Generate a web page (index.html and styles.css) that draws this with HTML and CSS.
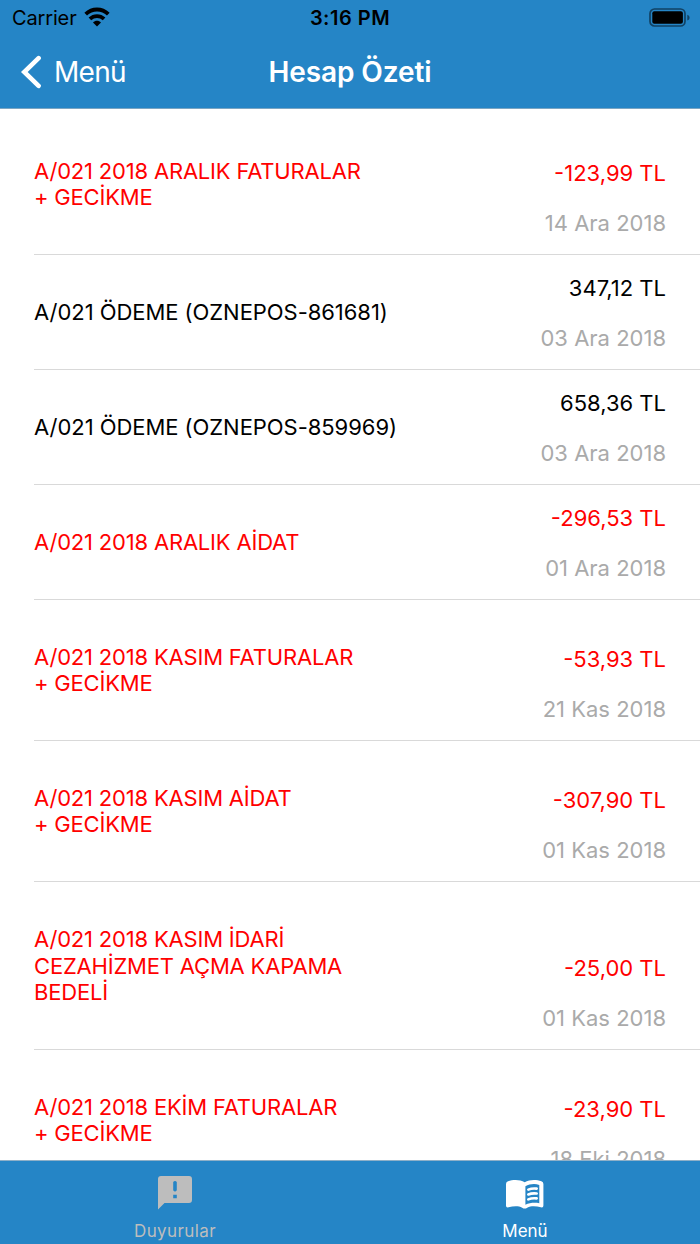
FILE: index.html
```
<!DOCTYPE html>
<html lang="tr">
  <head>
    <meta charset="UTF-8" />
    <meta name="viewport" content="width=device-width, initial-scale=1.0" />
    <title>Hesap Özeti</title>
    <link rel="stylesheet" href="styles.css">
  </head>
  <body>
    <header>
      <div class="status-bar">
        <div class="carrier">
          <span>Carrier</span>
          <svg width="26" height="20" viewBox="0 0 26 20">
            <g fill="none" stroke="#000" stroke-width="3.8">
              <path d="M1.7 7.2C8.2 .9 17.8 .9 24.3 7.2" />
              <path d="M5.9 11.9C10 8.1 16 8.1 20.1 11.9" />
            </g>
            <path d="M9 15.5C11.2 13.3 14.8 13.3 17 15.5L13 19.6z" />
          </svg>
        </div>
        <span class="time">3:16 PM</span>
        <svg class="battery" width="42" height="20" viewBox="0 0 42 20">
          <rect x="1" y="1" width="35" height="17" rx="4.5" fill="none" stroke="#114264" stroke-width="1.7" />
          <rect x="3.3" y="3.3" width="30.6" height="12.5" rx="2" />
          <path d="M38.3 6.7C41.3 7.6 41.3 11.6 38.3 12.5z" fill="#114264" />
        </svg>
      </div>
      <nav class="nav-bar">
        <a class="back">
          <svg width="22" height="34" viewBox="0 0 22 34">
            <path d="M18.6 3.2L4.3 17L18.6 30.8" fill="none" stroke="#fff" stroke-width="4.6" stroke-linecap="round" />
          </svg>
          <span>Menü</span>
        </a>
        <h1>Hesap Özeti</h1>
      </nav>
    </header>
    <main>
      <ul class="list">
        <li class="row debt">
          <p class="title">A/021 2018 ARALIK FATURALAR<br />+ GECİKME</p>
          <div class="info">
            <span class="amount">-123,99 TL</span>
            <span class="date">14 Ara 2018</span>
          </div>
        </li>
        <li class="row">
          <p class="title">A/021 ÖDEME (OZNEPOS-861681)</p>
          <div class="info">
            <span class="amount">347,12 TL</span>
            <span class="date">03 Ara 2018</span>
          </div>
        </li>
        <li class="row">
          <p class="title">A/021 ÖDEME (OZNEPOS-859969)</p>
          <div class="info">
            <span class="amount">658,36 TL</span>
            <span class="date">03 Ara 2018</span>
          </div>
        </li>
        <li class="row debt">
          <p class="title">A/021 2018 ARALIK AİDAT</p>
          <div class="info">
            <span class="amount">-296,53 TL</span>
            <span class="date">01 Ara 2018</span>
          </div>
        </li>
        <li class="row debt">
          <p class="title">A/021 2018 KASIM FATURALAR<br />+ GECİKME</p>
          <div class="info">
            <span class="amount">-53,93 TL</span>
            <span class="date">21 Kas 2018</span>
          </div>
        </li>
        <li class="row debt">
          <p class="title">A/021 2018 KASIM AİDAT<br />+ GECİKME</p>
          <div class="info">
            <span class="amount">-307,90 TL</span>
            <span class="date">01 Kas 2018</span>
          </div>
        </li>
        <li class="row debt">
          <p class="title">A/021 2018 KASIM İDARİ<br />CEZAHİZMET AÇMA KAPAMA<br />BEDELİ</p>
          <div class="info">
            <span class="amount">-25,00 TL</span>
            <span class="date">01 Kas 2018</span>
          </div>
        </li>
        <li class="row debt">
          <p class="title">A/021 2018 EKİM FATURALAR<br />+ GECİKME</p>
          <div class="info">
            <span class="amount">-23,90 TL</span>
            <span class="date">18 Eki 2018</span>
          </div>
        </li>
      </ul>
    </main>
    <footer class="tab-bar">
      <a class="tab">
        <svg width="40" height="40" viewBox="0 0 40 40">
          <path fill="#bdbdbd" fill-rule="evenodd" d="M6 3H34Q37 3 37 6V27Q37 30 34 30H9.5L3 36.5V6Q3 3 6 3zM18.2 9V17.2Q20 19.6 21.8 17.2V9Q20 6.8 18.2 9zM18.2 21.8V25.3H21.8V21.8z" />
        </svg>
        <span>Duyurular</span>
      </a>
      <a class="tab active">
        <svg width="40" height="40" viewBox="0 0 40 40">
          <path fill="#fff" d="M19.7 9.2C15 6.3 8 6.3 3 8.3Q1 9 1 11V32.5Q1 35 3.5 34.3C8.5 33 13.5 32.7 17.2 34.7Q19.7 36.4 22.2 34.7C26 32.7 31 33 35.9 34.3Q38.4 35 38.4 32.5V11Q38.4 9 36.4 8.3C31.5 6.3 24.5 6.3 19.7 9.2z" />
          <path fill="#2585c6" d="M20.4 13.2C24.5 10.9 30 10.5 34.3 11.9V30.2C29.5 29.3 24.5 29.8 20.4 31.7z" />
          <g fill="none" stroke="#fff" stroke-width="2.6" stroke-linecap="round">
            <path d="M23.3 16.6Q27 15 31.7 15.6" />
            <path d="M23.3 21.5Q27 19.9 31.7 20.5" />
            <path d="M23.3 26.4Q27 24.8 31.7 25.4" />
          </g>
        </svg>
        <span>Menü</span>
      </a>
    </footer>
  </body>
</html>
```

FILE: styles.css
```
* {
  box-sizing: border-box;
}
body {
  display: flex;
  flex-direction: column;
  height: 100vh;
  margin: 0;
  overflow: hidden;
  background-color: #fff;
  color: #000;
  font-family: Inter, "Liberation Sans", sans-serif;
}
header {
  height: 109px;
  flex-shrink: 0;
  background-color: #2585c6;
  border-bottom: 1px solid #7ba5c2;
}
.status-bar {
  display: grid;
  grid-template-columns: 1fr auto 1fr;
  align-items: center;
  height: 36px;
  padding: 0 9px;
  font-size: 20px;
}
.carrier {
  display: flex;
  align-items: center;
  gap: 7px;
  padding-left: 3px;
  letter-spacing: -0.15px;
}
.carrier svg {
  margin-top: -3px;
}
.time {
  font-weight: 600;
  letter-spacing: 0.5px;
}
.battery {
  justify-self: end;
  margin-top: -1px;
}
.nav-bar {
  display: grid;
  grid-template-columns: 1fr auto 1fr;
  align-items: center;
  height: 71px;
  padding: 0 20px;
  color: #fff;
}
.back {
  display: flex;
  align-items: center;
  gap: 12px;
  font-size: 28px;
  letter-spacing: -0.7px;
}
h1 {
  margin: 0;
  font-size: 28px;
  font-weight: 600;
  letter-spacing: -0.1px;
}
main {
  flex: 1;
  min-height: 0;
  overflow: hidden;
}
.list {
  margin: 0;
  padding: 4.6px 0 0 34px;
  list-style: none;
}
.row {
  display: flex;
  justify-content: space-between;
  align-items: center;
  padding: 31px 34px 31px 0;
  min-height: 115px;
  border-bottom: 1px solid #d9d9d9;
}
.title {
  margin: 0;
  padding: 13px 0;
  font-size: 22px;
  line-height: 26.1px;
  letter-spacing: -0.05px;
  white-space: nowrap;
}
.info {
  display: flex;
  flex-direction: column;
  align-self: flex-end;
  align-items: flex-end;
  gap: 24px;
  margin: -13px 0 -13px;
  font-size: 22px;
  line-height: 26px;
}
.date {
  color: #aaa;
}
.debt .title,
.debt .amount {
  color: #f00;
}
.debt .title {
  letter-spacing: -0.19px;
}
.tab-bar {
  display: flex;
  height: 84px;
  flex-shrink: 0;
  background-color: #2585c6;
  border-top: 1px solid #8fb0c8;
}
.tab {
  display: flex;
  flex: 1;
  flex-direction: column;
  align-items: center;
  padding-top: 12px;
  color: #bdbdbd;
  font-size: 17px;
  line-height: 20px;
  letter-spacing: 0.4px;
}
.tab span {
  margin-top: 8px;
}
.active {
  color: #fff;
  letter-spacing: 0;
}
```
